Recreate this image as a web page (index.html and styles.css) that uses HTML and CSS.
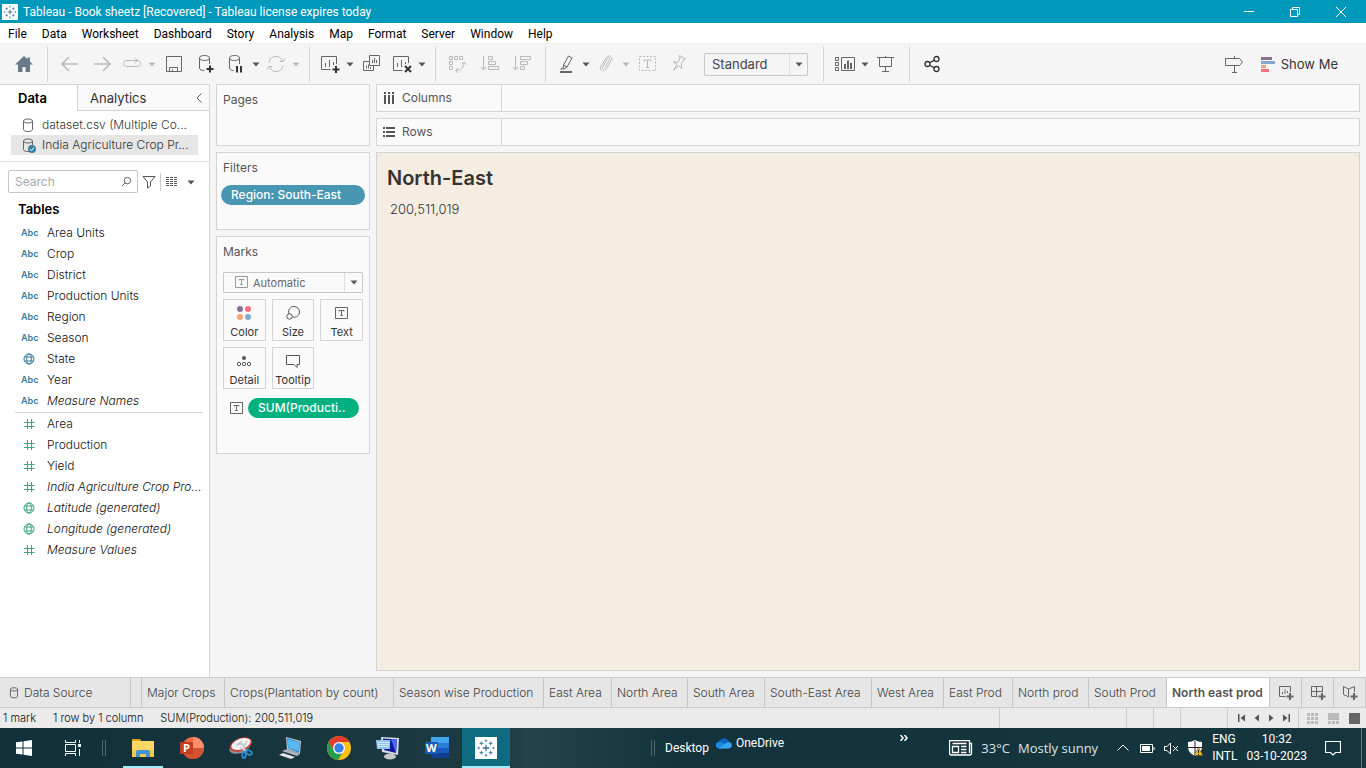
FILE: index.html
```html
<!DOCTYPE html>
<html lang="en">
<head>
<meta charset="utf-8">
<title>Tableau - Book sheetz</title>
<link rel="stylesheet" href="styles.css">
</head>
<body>
<svg class="defs" aria-hidden="true">
  <symbol id="caret" viewBox="0 0 8 8"><path d="M.5 2.500h7L4 6.500z" fill="currentColor"/></symbol>
  <symbol id="globe" viewBox="0 0 12 12"><g fill="none" stroke="currentColor"><circle cx="6" cy="6" r="5"/><ellipse cx="6" cy="6" rx="2.300" ry="5"/><path d="M1.500 4h9M1.500 8h9"/></g></symbol>
  <symbol id="hash" viewBox="0 0 12 12"><path d="M4.500 1v10M8.500 1v10M1 4.500h10.500M1 8.500h10.500" fill="none" stroke="currentColor"/></symbol>
  <symbol id="db" viewBox="0 0 12 15"><path d="M1.500 3v8.500c0 1.300 2 2 4.500 2s4.500-.7 4.500-2V3M1.500 3c0-1.200 2-2 4.500-2s4.500.8 4.500 2-2 2-4.500 2-4.500-.8-4.500-2z" fill="none" stroke="currentColor"/></symbol>
  <symbol id="tbox" viewBox="0 0 14 12"><path d="M.5.500h12v11H.5z" fill="none" stroke="currentColor"/><path d="M4 4.500V3.500h5v1M6.500 3.500v5M5.200 8.500h2.600" fill="none" stroke="currentColor"/></symbol>
  <symbol id="tableau" viewBox="0 0 24 24"><path fill="#fff" d="M0 0h24v24H0z"/><g stroke="#4d89ac" fill="none" stroke-width="1"><path d="M12 8.500v7M8.500 12h7" stroke="#2f6f9c" stroke-width="1.400"/><path d="M12 2.500v3M10.500 4h3M12 18.500v3M10.500 20h3M2.500 12h3M4 10.500v3M18.500 12h3M20 10.500v3"/><path stroke-width="1.200" d="M7 5v4M5 7h4M17 5v4M15 7h4M7 15v4M5 17h4M17 15v4M15 17h4"/></g></symbol>
</svg>

<header class="titlebar">
  <svg class="app-icon" viewBox="0 0 24 24"><use href="#tableau"/></svg>
  <span class="title">Tableau - Book sheetz [Recovered] - Tableau license expires today</span>
  <div class="win-controls">
    <button aria-label="Minimize"><svg viewBox="0 0 12 12"><path d="M1 5.500h10"/></svg></button>
    <button aria-label="Restore"><svg viewBox="0 0 12 12"><path d="M1.500 3.500h7v7h-7zM3.500 3.500v-2h7v7h-2"/></svg></button>
    <button aria-label="Close"><svg viewBox="0 0 12 12"><path d="M1 1l10 10M11 1L1 11"/></svg></button>
  </div>
</header>

<nav class="menubar" aria-label="Main menu">
  <button>File</button><button>Data</button><button>Worksheet</button><button>Dashboard</button><button>Story</button><button>Analysis</button><button>Map</button><button>Format</button><button>Server</button><button>Window</button><button>Help</button>
</nav>

<div class="toolbar" role="toolbar" aria-label="Toolbar">
  <button class="tool home" aria-label="Start page"><svg viewBox="0 0 20 20"><path d="M10 2L1 10.500h3V18h4.500v-5h3v5H16v-7.500h3L16 7.700V3.500h-2.500v1.800z" fill="#6b7887"/></svg></button>
  <span class="sep"></span>
  <button class="tool off" aria-label="Undo"><svg viewBox="0 0 20 20"><path d="M18 10H3M9 3l-7 7 7 7" stroke-width="1.500"/></svg></button>
  <button class="tool off" aria-label="Redo"><svg viewBox="0 0 20 20"><path d="M2 10h15M11 3l7 7-7 7" stroke-width="1.500"/></svg></button>
  <button class="tool drop off" aria-label="Replay"><svg viewBox="0 0 20 20"><path d="M15.500 12.500c2-.3 3-1.300 3-3s-1.500-3-3.500-3h-1M10 6.500H5c-2.500 0-3.500 1.400-3.500 3s1 3 3.500 3h11M9 6.500h6M12.500 4l3 2.500-3 2.500"/></svg><svg class="caret"><use href="#caret"/></svg></button>
  <button class="tool" aria-label="Save"><svg viewBox="0 0 20 20"><path d="M2.500 2.500h15v15h-15zM5.500 17.500v-4h8v4M8.500 17.500v-2"/></svg></button>
  <button class="tool" aria-label="New data source"><svg viewBox="0 0 20 20"><path d="M3.500 4v10c0 1.500 2 2.500 5 2.500M13.500 4v6M3.500 4c0-1.600 2-2.500 5-2.500s5 .9 5 2.500-2 2.500-5 2.500-5-.9-5-2.500z"/><path d="M14 11.500v7M10.500 15h7" stroke="#333" stroke-width="2"/></svg></button>
  <button class="tool drop" aria-label="Pause auto updates"><svg viewBox="0 0 20 20"><path d="M3.500 4v10c0 1.500 2 2.500 4 2.500M13.500 4v6M3.500 4c0-1.600 2-2.500 5-2.500s5 .9 5 2.500-2 2.500-5 2.500-5-.9-5-2.500z"/><path d="M11 12v6.500M15 12v6.500" stroke="#333" stroke-width="2"/></svg><svg class="caret"><use href="#caret"/></svg></button>
  <button class="tool drop off" aria-label="Run update"><svg viewBox="0 0 20 20"><path d="M3 8.500c.8-4 3.500-6 7-6 3.300 0 5.500 2 6.500 5M17 11.500c-.8 4-3.500 6-7 6-3.300 0-5.500-2-6.500-5M14 7.500h3.500l1-3M6 12.500H2.500l-1 3"/></svg><svg class="caret"><use href="#caret"/></svg></button>
  <span class="sep"></span>
  <button class="tool drop" aria-label="New worksheet"><svg viewBox="0 0 20 20"><path d="M16.500 10V2.500h-15v13h9M5.500 9v4M9.500 6v7M13.500 8v3" /><path d="M16 12v7M12.500 15.500h7" stroke="#333" stroke-width="2"/></svg><svg class="caret"><use href="#caret"/></svg></button>
  <button class="tool" aria-label="Duplicate sheet"><svg viewBox="0 0 20 20"><path d="M7.500 1.500h10v10h-10zM7.500 7.500h-6v9h10v-5M10.500 6v3M12.500 4v5M14.500 6v3M4.500 11.500v3M6.500 10.500v4M8.500 13v2"/></svg></button>
  <button class="tool drop" aria-label="Clear sheet"><svg viewBox="0 0 20 20"><path d="M16.500 9V2.500h-15v14h9M5.500 9v4M9.500 6v7M13.500 8v2"/><path d="M13 12l6 6M19 12l-6 6" stroke="#333" stroke-width="2"/></svg><svg class="caret"><use href="#caret"/></svg></button>
  <span class="sep"></span>
  <button class="tool off" aria-label="Swap rows and columns"><svg viewBox="0 0 20 20"><path d="M1.500 2.500h3v3h-3zM6.500 2.500h3v3h-3zM11.500 2.500h3v3h-3zM1.500 7.500h3v3h-3zM1.500 12.500h3v3h-3zM8 16.500c5 0 8-3 8-8M13.500 10.500L16 8l2.500 2.500M10 14l-2.500 2.500L10 19"/></svg></button>
  <button class="tool off" aria-label="Sort ascending"><svg viewBox="0 0 20 20"><path d="M3.500 2v14M1 13l2.500 3L6 13M8.500 2.500h4v3h-4zM8.500 7.500h7v3h-7zM8.500 12.500h10v3h-10z"/></svg></button>
  <button class="tool off" aria-label="Sort descending"><svg viewBox="0 0 20 20"><path d="M3.500 2v14M1 13l2.500 3L6 13M8.500 2.500h10v3h-10zM8.500 7.500h7v3h-7zM8.500 12.500h4v3h-4z"/></svg></button>
  <span class="sep"></span>
  <button class="tool drop" aria-label="Highlight"><svg viewBox="0 0 20 20"><path d="M7.500 11l5-9 3.500 2-5 9zM7.500 11L7 15.500l4-2.500M6 13.500l-1 2.500"/><path d="M4 18h12" stroke-width="2"/></svg><svg class="caret"><use href="#caret"/></svg></button>
  <button class="tool drop off" aria-label="Group members"><svg viewBox="0 0 20 20"><path d="M9 13.500l4.500-8c.6-1.600-1.200-2.400-2-1L7 12c-1.500 3.500 1.500 5 3.500 2.500l5-8.500c1.500-3.500-2.500-5.500-5-2.500L5 12c-1.500 2.500-.5 4.500 1.500 5"/></svg><svg class="caret"><use href="#caret"/></svg></button>
  <button class="tool off" aria-label="Show mark labels"><svg viewBox="0 0 20 20"><path d="M1.500 2.500h16v14h-16z" stroke-dasharray="2 1.500"/><path d="M6 7.500V6h7v1.500M9.500 6v7.500M8 13.500h3"/></svg></button>
  <button class="tool off" aria-label="Fix axes"><svg viewBox="0 0 20 20"><path d="M9.500 1.500l6 3.500-2 1-2 3.500v5l-3-3-5 5 3.500-6.500-4-2h5l2-3.500z"/></svg></button>
  <div class="fit">
    <select aria-label="Fit"><option>Standard</option></select>
    <svg class="caret"><use href="#caret"/></svg>
  </div>
  <span class="sep"></span>
  <button class="tool drop" aria-label="Show or hide cards"><svg class="wide" viewBox="0 0 22 20"><path d="M2.500 3.500h3v3h-3zM2.500 8.500h3v3h-3zM2.500 13.500h3v3h-3zM8.500 3.500h13v13h-13z"/><path d="M12 10v5M15 6.500V15M18 9v6" stroke-width="2"/></svg><svg class="caret"><use href="#caret"/></svg></button>
  <button class="tool" aria-label="Presentation mode"><svg viewBox="0 0 20 20"><path d="M1 3.500h17M3.500 3.500v9h12v-9M9.500 12.500v5M6 17.500h7M9.500 2v2"/></svg></button>
  <span class="sep"></span>
  <button class="tool" aria-label="Share"><svg viewBox="0 0 20 20"><g stroke="#333" stroke-width="1.300"><circle cx="5.500" cy="10" r="2.500"/><circle cx="14.500" cy="5" r="2.500"/><circle cx="14.500" cy="15" r="2.500"/><path d="M8 8.500l4.500-2.300M8 11.500l4.500 2.300"/></g></svg></button>
  <button class="tool guide" aria-label="Guide"><svg viewBox="0 0 20 20"><path d="M1.500 4.500h14l3 3.500-3 3.500h-14zM10.500 2v2.500M10.500 11.500v7M8 18.500h5"/></svg></button>
  <button class="showme"><svg viewBox="0 0 14 15"><path fill="#8a6f9b" d="M0 0h11v3H0z"/><path fill="#84a9d0" d="M0 4h14v3H0z"/><path fill="#f5a37b" d="M0 8h5v3H0z"/><path fill="#fa6f7f" d="M0 12h8v3H0z"/></svg>Show Me</button>
</div>

<main class="workspace">
  <aside class="data-pane">
    <div class="pane-tabs">
      <button class="pane-tab current">Data</button>
      <button class="pane-tab">Analytics<svg class="chev" viewBox="0 0 8 12"><path d="M6.500 1.500L2 6l4.500 4.500"/></svg></button>
    </div>
    <ul class="sources">
      <li><svg viewBox="0 0 14 15"><use href="#db" width="12" height="15"/></svg><span>dataset.csv (Multiple Co...</span></li>
      <li class="picked"><svg viewBox="0 0 14 15"><use href="#db" width="12" height="15"/><circle cx="10" cy="11" r="4" fill="#3a80a0"/><path d="M8 11l1.500 1.500L12 9.500" fill="none" stroke="#fff"/></svg><span>India Agriculture Crop Pr...</span></li>
    </ul>
    <div class="search-row">
      <label class="search"><input type="text" placeholder="Search" aria-label="Search"><svg viewBox="0 0 12 12"><circle cx="7" cy="5" r="3.500"/><path d="M4.500 7.500L1 11"/></svg></label>
      <button class="mini" aria-label="Filter"><svg viewBox="0 0 14 14"><path d="M1 1.500h12L8.500 7v4l-3 2V7z"/></svg></button>
      <span class="vline"></span>
      <button class="mini" aria-label="View options"><svg viewBox="0 0 14 14"><path d="M1 2.500h12M1 4.500h12M1 6.500h12M1 8.500h12M1 10.500h12" stroke-dasharray="3 1"/></svg><svg class="caret"><use href="#caret"/></svg></button>
    </div>
    <h2>Tables</h2>
    <ul class="fields dims">
      <li><b>Abc</b>Area Units</li>
      <li><b>Abc</b>Crop</li>
      <li><b>Abc</b>District</li>
      <li><b>Abc</b>Production Units</li>
      <li><b>Abc</b>Region</li>
      <li><b>Abc</b>Season</li>
      <li><svg><use href="#globe"/></svg>State</li>
      <li><b>Abc</b>Year</li>
      <li><b>Abc</b><i>Measure Names</i></li>
    </ul>
    <ul class="fields measures">
      <li><svg><use href="#hash"/></svg>Area</li>
      <li><svg><use href="#hash"/></svg>Production</li>
      <li><svg><use href="#hash"/></svg>Yield</li>
      <li><svg><use href="#hash"/></svg><i>India Agriculture Crop Pro...</i></li>
      <li><svg><use href="#globe"/></svg><i>Latitude (generated)</i></li>
      <li><svg><use href="#globe"/></svg><i>Longitude (generated)</i></li>
      <li><svg><use href="#hash"/></svg><i>Measure Values</i></li>
    </ul>
  </aside>

  <section class="cards">
    <div class="card pages"><h3>Pages</h3></div>
    <div class="card filters"><h3>Filters</h3><button class="pill blue">Region: South-East</button></div>
    <div class="card marks">
      <h3>Marks</h3>
      <div class="mark-type">
        <svg class="tb" viewBox="0 0 14 12"><use href="#tbox"/></svg>
        <select aria-label="Mark type"><option>Automatic</option></select>
        <svg class="caret"><use href="#caret"/></svg>
      </div>
      <div class="mark-grid">
        <button><svg viewBox="0 0 16 16"><circle cx="4" cy="4" r="3" fill="#8a6f9b"/><circle cx="12" cy="4" r="3" fill="#fa6f7f"/><circle cx="4" cy="12" r="3" fill="#f5a37b"/><circle cx="12" cy="12" r="3" fill="#84a9d0"/></svg>Color</button>
        <button><svg viewBox="0 0 16 16" class="line"><path d="M4 9C2.500 4.500 5.500 1.500 9 1.500c3 0 5.500 2.300 5.500 5.500s-3 6-7 5"/><circle cx="4.500" cy="11.500" r="2.700"/></svg>Size</button>
        <button><svg viewBox="0 0 14 12" class="tb"><use href="#tbox"/></svg>Text</button>
        <button><svg viewBox="0 0 16 16" class="line"><circle cx="8" cy="5" r="2" fill="#555" stroke="none"/><circle cx="3" cy="11" r="1.700"/><circle cx="8" cy="11" r="1.700"/><circle cx="13" cy="11" r="1.700"/></svg>Detail</button>
        <button><svg viewBox="0 0 16 16" class="line"><path d="M1.500 2.500h13v9h-2.500v3l-3-3H1.500z"/></svg>Tooltip</button>
      </div>
      <div class="mark-pill"><svg class="tb" viewBox="0 0 14 12"><use href="#tbox"/></svg><button class="pill green">SUM(Producti..</button></div>
    </div>
  </section>

  <section class="view">
    <div class="shelf"><div class="shelf-name"><svg viewBox="0 0 12 12"><path d="M2 0v2M6 0v2M10 0v2M2 3v9M6 3v9M10 3v9" stroke-width="2"/></svg>Columns</div></div>
    <div class="shelf"><div class="shelf-name"><svg viewBox="0 0 12 12"><path d="M0 2h2M0 6h2M0 10h2M3 2h9M3 6h9M3 10h9" stroke-width="2"/></svg>Rows</div></div>
    <div class="canvas"><h1>North-East</h1><p>200,511,019</p></div>
  </section>
</main>

<nav class="sheet-tabs" aria-label="Sheets">
  <button class="source"><svg viewBox="0 0 12 15"><use href="#db"/></svg>Data Source</button>
  <span></span>
  <button>Major Crops</button>
  <button>Crops(Plantation by count)</button>
  <button>Season wise Production</button>
  <button>East Area</button>
  <button>North Area</button>
  <button>South Area</button>
  <button>South-East Area</button>
  <button>West Area</button>
  <button>East Prod</button>
  <button>North prod</button>
  <button>South Prod</button>
  <button class="current">North east prod</button>
  <button class="add" aria-label="New worksheet"><svg viewBox="0 0 16 16"><path d="M12.500 7V1.500h-11v10h6M4.500 7v2M7 4.500V9M9.500 6v2"/><path d="M12 8v7M8.500 11.500h7" stroke-width="2"/></svg></button>
  <button class="add" aria-label="New dashboard"><svg viewBox="0 0 16 16"><path d="M12.500 7V1.500h-11v10h6M1.500 6.500h11M6.500 1.500v10"/><path d="M12 8v7M8.500 11.500h7" stroke-width="2"/></svg></button>
  <button class="add" aria-label="New story"><svg viewBox="0 0 16 16"><path d="M7 12L1.500 9.500v-8L6.500 4l6-2.500V7M6.500 4v8"/><path d="M12 8v7M8.500 11.500h7" stroke-width="2"/></svg></button>
</nav>

<footer class="status">
  <span>1 mark</span><span>1 row by 1 column</span><span>SUM(Production): 200,511,019</span>
  <div class="cells"><i></i><i></i><i></i><i></i></div>
  <div class="pager">
    <button aria-label="First"><svg viewBox="0 0 8 8"><path d="M0 0h1.500v8H0zM7 .5v7L2.500 4z"/></svg></button>
    <button aria-label="Previous"><svg viewBox="0 0 8 8"><path d="M6 .5v7L1.500 4z"/></svg></button>
    <button aria-label="Next"><svg viewBox="0 0 8 8"><path d="M2 .5v7L6.500 4z"/></svg></button>
    <button aria-label="Last"><svg viewBox="0 0 8 8"><path d="M6.500 0H8v8H6.500zM1 .5v7L5.500 4z"/></svg></button>
  </div>
  <div class="modes">
    <button aria-label="Sheet sorter"><svg viewBox="0 0 11 11"><path fill="#bbb" d="M0 0h3v3H0zM4 0h3v3H4zM8 0h3v3H8zM0 4h3v3H0zM4 4h3v3H4zM8 4h3v3H8zM0 8h3v3H0zM4 8h3v3H4zM8 8h3v3H8z"/></svg></button>
    <button aria-label="Filmstrip"><svg viewBox="0 0 11 11"><path fill="#bbb" d="M0 0h11v7H0zM0 8h3v3H0zM4 8h3v3H4zM8 8h3v3H8z"/></svg></button>
    <button aria-label="Tabs"><svg viewBox="0 0 11 11"><path fill="#666" d="M0 0h11v11H0z"/></svg></button>
  </div>
</footer>

<div class="taskbar">
  <button class="task" aria-label="Start"><svg class="s16" viewBox="0 0 16 16"><path fill="#fff" d="M0 2.300L6.500 1.400v6.100H0zM7.500 1.200L16 0v7.500H7.500zM0 8.500h6.500v6.100L0 13.700zM7.500 8.500H16V16l-8.500-1.200z"/></svg></button>
  <button class="task" aria-label="Task view"><svg class="s16" viewBox="0 0 16 16"><path d="M.5 0v2.500h10V0M.5 16v-2.500h10V16M.5 4.500h10v7H.5zM14.500 0v3M14.500 9v7" fill="none" stroke="#fff"/><path fill="#fff" d="M13 4h3v3h-3z"/></svg></button>
  <span class="grip"></span>
  <button class="task open" aria-label="File Explorer"><svg viewBox="0 0 24 24"><path fill="#e0a010" d="M1 3h8l2 3H1z"/><path fill="#ffd764" d="M1 5h22v16H1z"/><path fill="#f7c94b" d="M1 14h22v7H1z"/><path fill="#3f94d8" d="M5 21v-5q0-2 2-2h10q2 0 2 2v5h-4v-3H9v3z"/></svg></button>
  <button class="task" aria-label="PowerPoint"><svg viewBox="0 0 24 24"><circle cx="13" cy="12" r="11" fill="#ed6c47"/><path d="M13 1a11 11 0 0 1 11 11H13z" fill="#ff8f6b"/><path d="M2 12h22a11 11 0 0 1-22 0z" fill="#d35230"/><rect y="6" width="13" height="12" rx="1" fill="#c43e1c"/><text x="3" y="16" class="glyph">P</text></svg></button>
  <button class="task" aria-label="Snipping Tool"><svg viewBox="0 0 24 24"><ellipse cx="11" cy="11" rx="11" ry="6" transform="rotate(-20 11 11)" fill="#8d9398"/><ellipse cx="12" cy="8.500" rx="11.500" ry="6.500" transform="rotate(-20 12 8.500)" fill="#d93636"/><ellipse cx="12" cy="8" rx="10" ry="5.200" transform="rotate(-20 12 8)" fill="#f1f3f4"/><path d="M7 10l6-5M9 8h6M15 11l3-6" stroke="#a5acb1"/><path d="M14 8l2 8M11 12l7 3" stroke="#c7cdd1" stroke-width="1.500"/><g fill="none" stroke="#2b8fd0" stroke-width="1.800"><ellipse cx="15" cy="19" rx="1.800" ry="3"/><ellipse cx="20" cy="16.500" rx="3" ry="2" transform="rotate(30 20 16.500)"/></g></svg></button>
  <button class="task" aria-label="Remote device"><svg viewBox="0 0 24 24"><path fill="#c5ccd1" d="M8 1l15 4-1 13-13-5z"/><path fill="#1d84c6" d="M9 2l13 4-1 11-11-5z"/><path fill="#5ab9f2" d="M9.500 3L21.500 6.500l-1 9-10-4z"/><path fill="#aeb5ba" d="M4 15l5-2 13 5-3 2z"/><path fill="#dfe3e6" d="M1 19l4-2 12 4-4 2z"/></svg></button>
  <button class="task" aria-label="Chrome"><svg viewBox="0 0 24 24"><circle cx="12" cy="12" r="12" fill="#fbc116"/><path fill="#269e4b" d="M12 12L1.600 6A12 12 0 0 0 11 24l5.500-9z"/><path fill="#e33b2e" d="M12 12L7 14.500 1.600 6A12 12 0 0 1 22.400 6H12z"/><circle cx="12" cy="12" r="6" fill="#fff"/><circle cx="12" cy="12" r="4.700" fill="#3b7ded"/></svg></button>
  <button class="task" aria-label="On-screen keyboard"><svg viewBox="0 0 24 24"><ellipse cx="14" cy="20.500" rx="6" ry="3" fill="#c9c9c9"/><path fill="#d8dde4" d="M5 1l18 1-1 17-16-3z"/><path fill="#101a9c" d="M7 2.500l14 1-1 13.500L8 14z"/><path fill="#4b6cf0" d="M15 3l6 .5-1 13.500z"/><path fill="#8fc4ee" d="M0 4h14v9H1z"/><path stroke="#e8f3fc" stroke-width="1.200" stroke-dasharray="2 .7" d="M1 6.500h12M1.500 8.500H13M2 10.500h11"/></svg></button>
  <button class="task" aria-label="Word"><svg viewBox="0 0 24 24"><path fill="#41a5ee" d="M6 1h18v6H6z"/><path fill="#2b7cd3" d="M6 7h18v5H6z"/><path fill="#185abd" d="M6 12h18v5H6z"/><path fill="#103f91" d="M6 17h18v5H6z"/><rect y="6" width="13" height="12" rx="1" fill="#185abd"/><text x="1" y="16" class="glyph">W</text></svg></button>
  <button class="task open active" aria-label="Tableau"><svg class="s22" viewBox="0 0 24 24"><use href="#tableau"/></svg></button>
  <div class="desk">
    <span class="grip"></span>
    <span>Desktop</span>
    <span class="drive"><svg viewBox="0 0 16 11"><path fill="#0c64c0" d="M3 7a3.500 3.500 0 0 1 2-5.500A5 5 0 0 1 13 4l-5 4z"/><path fill="#1a8ae0" d="M3 10.500a3 3 0 0 1 0-6.500q5-1 9 6z"/><path fill="#35a7f0" d="M3 10.500l7-5.500 3-1a3.300 3.300 0 0 1 0 6.500z"/></svg>OneDrive</span>
    <button class="more" aria-label="More"><svg viewBox="0 0 8 6"><path d="M.5 0l2.500 3L.5 6M4.500 0L7 3 4.500 6" fill="none" stroke="#fff" stroke-width="1.500"/></svg></button>
  </div>
  <button class="weather"><svg viewBox="0 0 24 16"><path d="M20.500 3.500h2V13q0 2-2 2h-18q-2 0-2-2V.500h20V13M3.500 3.500h14M3.500 6.500h6v6h-6zM12 6.500h5.500M12 9.500h5.500M12 12.500h5.500" fill="none" stroke="#fff" stroke-width="1.300"/></svg><span>33°C</span><span>Mostly sunny</span></button>
  <div class="tray">
    <button aria-label="Hidden icons"><svg viewBox="0 0 16 16"><path d="M2.500 10.500L8 5l5.500 5.500"/></svg></button>
    <button aria-label="Battery"><svg viewBox="0 0 16 16"><path d="M1.500 4.500h12v8h-12zM15 7v3"/><path fill="#fff" stroke="none" d="M3 6h8v5H3z"/></svg></button>
    <button aria-label="Volume muted"><svg viewBox="0 0 16 16"><path d="M1.500 6.500H4L7.500 3v11L4 10.500H1.500zM10 6l5 5M15 6l-5 5"/></svg></button>
    <button aria-label="Security"><svg viewBox="0 0 16 16"><path fill="#fff" stroke="none" d="M8 0q3 2 7 2v5q0 6-7 9Q1 13 1 7V2q4 0 7-2z"/><path stroke="#222" d="M8 1v14M1 7.500h14"/><path fill="#ffc20e" stroke="#333" stroke-width=".5" d="M11.500 7.500L16 15.500H7z"/><path stroke="#222" d="M11.500 10v3M11.500 14v1"/></svg></button>
  </div>
  <div class="two">ENG<br>INTL</div>
  <div class="two clock">10:32<br>03-10-2023</div>
  <button class="note" aria-label="Notifications"><svg viewBox="0 0 16 16"><path d="M.5 1.500h15v11h-5L8 15l-2.500-2.500h-5z" fill="none" stroke="#fff" stroke-width="1.200"/></svg></button>
  <button class="peek" aria-label="Show desktop"></button>
</div>
</body>
</html>
```

FILE: styles.css
```css
:root {
  --ui: "Inter", "Liberation Sans", sans-serif;
  --os: "Roboto", "Noto Sans", sans-serif;
  --line: #d4d4d4;
}
* { box-sizing: border-box; }
body {
  margin: 0;
  min-height: 100vh;
  display: flex;
  flex-direction: column;
  font: 12px/20px var(--ui);
  color: #333;
  background: #f5f5f5;
}
button, input, select { font: inherit; color: inherit; }
button { margin: 0; padding: 0; border: 0; background: none; white-space: nowrap; }
ul, h1, h2, h3, p { margin: 0; padding: 0; list-style: none; }
svg { display: block; flex: none; }
.defs { position: absolute; width: 0; height: 0; }
.caret { width: 8px; height: 8px; color: #555; }

/* Title bar and menus */
.titlebar { display: flex; align-items: center; height: 23px; padding: 0 2px; background: #0099bc; color: #fff; font-family: var(--os); }
.app-icon { width: 16px; height: 16px; margin-right: 5px; }
.win-controls { display: flex; margin-left: auto; }
.win-controls button { width: 46px; height: 22px; display: grid; place-items: center; }
.win-controls svg { width: 12px; height: 12px; fill: none; stroke: #fff; }
.menubar { display: flex; height: 20px; padding-left: 8px; gap: 15px; background: #fff; color: #000; font-family: var(--os); line-height: 22px; }

/* Toolbar */
.toolbar { display: flex; align-items: center; height: 41px; border-top: 1px solid #eee; }
.tool { width: 32px; height: 32px; display: flex; align-items: center; justify-content: center; }
.tool svg:first-child { width: 20px; height: 20px; fill: none; stroke: #666; }
.tool svg.wide:first-child { width: 22px; }
.tool.home { width: 47px; }
.tool.home svg:first-child { stroke: none; }
.tool.drop { width: 40px; gap: 6px; padding-left: 2px; }
.tool.off svg:first-child { stroke: #b9b9b9; }
.tool.off .caret { color: #b9b9b9; }
.sep { width: 1px; height: 35px; margin: 0 6px 0 7px; background: var(--line); }
.home + .sep { margin-left: 0; }
.fit { position: relative; width: 104px; margin: 0 8px; }
.fit select, .mark-type select { appearance: none; width: 100%; border: 1px solid #c8c8c8; border-radius: 1px; background: #fafafa; }
.fit select { height: 23px; padding: 0 7px; font-size: 13px; color: #444; background: #f5f5f5; }
.fit .caret, .mark-type .caret { position: absolute; right: 5px; top: 7px; pointer-events: none; }
.fit::after, .mark-type::after { content: ""; position: absolute; right: 18px; top: 1px; bottom: 1px; width: 1px; background: #ddd; }
.guide { margin-left: auto; }
.showme { display: flex; align-items: center; gap: 6px; margin: 0 28px 0 11px; font-size: 13px; }
.showme svg { width: 14px; height: 15px; }

/* Workspace */
.workspace { flex: 1; display: grid; grid-template-columns: 210px 154px 1fr; column-gap: 6px; padding-right: 6px; }
.data-pane { background: #fff; border-top: 1px solid var(--line); border-right: 1px solid var(--line); }
.pane-tabs { display: grid; grid-template-columns: 77px 1fr; height: 26px; font-size: 13px; }
.pane-tab { display: flex; align-items: center; padding: 0 6px 0 12px; border: solid var(--line); border-width: 0 0 1px 1px; background: #fafafa; }
.pane-tab.current { padding-left: 18px; border: 0; background: #fff; color: #000; font-weight: 600; }
.chev { width: 8px; height: 12px; margin-left: auto; fill: none; stroke: #555; }
.sources { padding: 4px 11px 6px; border-bottom: 1px solid #e2e2e2; color: #333; font-weight: 300; }
.sources li { display: flex; align-items: center; gap: 6px; height: 20px; padding-left: 11px; white-space: nowrap; }
.sources svg { width: 14px; height: 15px; color: #666; }
.sources .picked { background: #e6e6e6; }
.search-row { display: flex; align-items: center; gap: 4px; padding: 8px 10px 6px 8px; }
.search { position: relative; width: 130px; height: 23px; }
.search input { width: 100%; height: 100%; padding: 0 6px; border: 1px solid #c4c4c4; border-radius: 2px; }
.search input::placeholder { color: #aaa; }
.search svg { position: absolute; right: 6px; top: 6px; width: 11px; height: 11px; fill: none; stroke: #555; }
.mini { display: flex; align-items: center; gap: 8px; }
.mini svg:first-child { width: 14px; height: 14px; fill: none; stroke: #555; }
.vline { width: 1px; height: 18px; background: #ccc; }
h2 { padding: 0 18px; font-size: 13px; line-height: 20px; font-weight: 600; color: #000; }
.fields { color: #111; font-weight: 300; line-height: 21px; }
.fields li { display: grid; grid-template-columns: 26px 1fr; align-items: center; height: 21px; padding-left: 21px; white-space: nowrap; }
.fields svg { width: 12px; height: 12px; margin-left: 2px; }
.fields b { font-size: 9px; font-weight: 600; }
.dims { padding: 3px 0 1px; }
.dims b, .dims svg { color: #3a7c9a; }
.measures { position: relative; padding-top: 1px; }
.measures::before { content: ""; position: absolute; left: 15px; right: 6px; top: 0; height: 1px; background: #d8d8d8; }
.measures svg { color: #3fa67c; }

.cards { display: flex; flex-direction: column; gap: 6px; }
.card { padding: 5px 6px; border: 1px solid var(--line); background: #fafafa; }
h3 { font-size: 12px; line-height: 20px; font-weight: 400; color: #555; }
.pages { height: 62px; }
.filters { height: 78px; padding-right: 4px; padding-left: 4px; }
.filters h3 { padding-left: 2px; }
.marks { height: 218px; }
.pill { display: block; height: 20px; padding: 0 10px; border-radius: 10px; color: #fff; font-weight: 500; text-align: left; }
.blue { width: 100%; margin-top: 7px; background: #4996b2; }
.green { flex: 1; margin-right: 4px; background: #00b180; }
.tb { width: 14px; height: 12px; color: #666; }
.mark-type { position: relative; margin: 10px 0 6px; color: #666; }
.mark-type select { display: block; height: 21px; padding-left: 29px; font-size: 11px; }
.mark-type .tb { position: absolute; left: 12px; top: 4px; color: #999; }
.mark-type .caret { top: 6px; }
.mark-grid { display: grid; grid-template-columns: repeat(3, 1fr); gap: 6px; }
.mark-grid button { display: flex; flex-direction: column; align-items: center; justify-content: space-between; height: 42px; padding-top: 5px; border: 1px solid var(--line); font-size: 11px; line-height: 16px; }
.mark-grid svg { width: 16px; height: 16px; }
.mark-grid svg.tb { width: 14px; height: 12px; margin-top: 2px; }
.line { fill: none; stroke: #555; }
.mark-pill { display: flex; align-items: center; gap: 4px; margin-top: 9px; padding-left: 7px; }

.view { display: flex; flex-direction: column; gap: 6px; padding-bottom: 6px; }
.shelf { height: 28px; border: 1px solid var(--line); background: #fafafa; }
.shelf-name { display: flex; align-items: center; gap: 7px; width: 125px; height: 100%; padding-left: 6px; border-right: 1px solid var(--line); color: #555; }
.shelf-name svg { width: 12px; height: 12px; fill: none; stroke: #555; }
.canvas { flex: 1; padding: 11px 10px; border: 1px solid var(--line); background: #f6ede2; }
h1 { font-size: 20px; line-height: 28px; font-weight: 600; }
.canvas p { padding: 7px 3px; color: #333; font-size: 13px; font-weight: 300; }

/* Sheet tabs and status */
.sheet-tabs { display: grid; grid-template-columns: 131px 11px 83fr 169fr 150fr 68fr 76fr 77fr 107fr 72fr 69fr 76fr 78fr 103fr 32px 32px 32px; height: 31px; border: solid #ccc; border-width: 1px 0; background: #e6e6e6; color: #444; font-weight: 300; }
.sheet-tabs > * { min-width: 0; padding: 0 5px; border-right: 1px solid #c8c8c8; text-align: left; }
.sheet-tabs .source { display: flex; align-items: center; gap: 5px; padding-left: 9px; }
.source svg { width: 10px; height: 12px; }
.sheet-tabs .current { background: #fff; font-weight: 600; color: #555; }
.sheet-tabs .add { display: grid; place-items: center; }
.add svg { width: 16px; height: 16px; fill: none; stroke: #666; }
.status { display: flex; align-items: stretch; gap: 17px; height: 20px; padding-left: 3px; background: #ebebeb; color: #111; font-size: 11px; font-weight: 300; white-space: nowrap; }
.cells { display: grid; grid-template-columns: 127px 27px 27px 47px; margin-left: auto; }
.cells i, .pager, .modes { border-left: 1px solid #ccc; }
.pager { display: flex; align-items: center; justify-content: space-evenly; width: 71px; margin-left: -17px; padding: 0 2px 0 4px; }
.pager svg { width: 8px; height: 8px; fill: #555; }
.modes { display: flex; align-items: center; justify-content: space-between; width: 68px; margin-left: -17px; padding: 0 6px 0 8px; }
.modes svg { width: 11px; height: 11px; }

/* Taskbar */
.taskbar { display: flex; align-items: center; height: 40px; background: linear-gradient(90deg, #10303a, #1b3a41 36%, #24434a 39%, #12333c 50%, #16363f); color: #fff; font-family: var(--os); white-space: nowrap; }
.task { width: 48px; height: 40px; margin-right: 1px; display: grid; place-items: center; }
.task svg { width: 24px; height: 24px; }
.task svg.s16 { width: 16px; height: 16px; }
.task svg.s22 { width: 22px; height: 22px; }
.glyph { font: bold 11px "Open Sans", sans-serif; fill: #fff; }
.open { background: linear-gradient(#a5ecfb, #a5ecfb) no-repeat center bottom / 40px 2px; }
.active { background-color: #0f6b80; background-size: 48px 2px; }
.grip { width: 4px; height: 16px; border: solid #4d656b; border-width: 0 1px; }
.task + .grip { margin: 0 13px 0 4px; }
.desk { display: flex; align-items: center; flex: 1; margin-left: 140px; gap: 7px; }
.desk .grip { margin-right: 3px; }
.drive { display: flex; align-items: center; gap: 4px; padding-bottom: 10px; }
.drive svg { width: 16px; height: 11px; }
.more { margin: 0 41px 20px auto; }
.more svg { width: 8px; height: 6px; }
.weather { display: flex; align-items: center; gap: 8px; color: #dde5e7; font-family: "Open Sans", sans-serif; font-size: 13px; }
.weather svg { width: 24px; height: 16px; }
.tray { display: flex; gap: 8px; margin-left: 17px; }
.tray svg { width: 16px; height: 16px; fill: none; stroke: #fff; }
.two { margin-left: 9px; line-height: 17px; }
.clock { text-align: center; }
.note { margin: 0 20px 0 18px; }
.note svg { width: 16px; height: 16px; }
.peek { width: 5px; height: 40px; border-left: 1px solid #5d7479; }
```
